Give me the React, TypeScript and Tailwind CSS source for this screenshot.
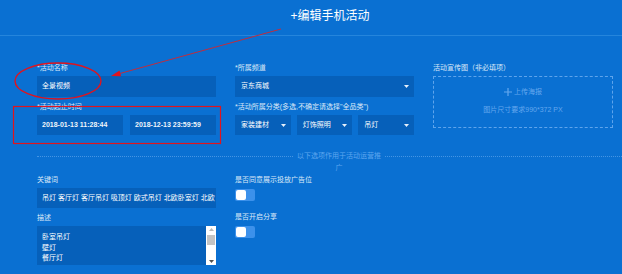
import React from "react";

const font = "font-['Liberation_Sans','Noto_Sans_CJK_SC',sans-serif]";

function Label({ children }: { children: React.ReactNode }) {
  return <div className="h-[10px] text-[7px] leading-[10px] text-[#dce9f8] whitespace-nowrap">{children}</div>;
}

function Caret() {
  return (
    <svg width="5" height="3" viewBox="0 0 5 3" className="shrink-0">
      <path d="M0 0h5L2.5 3z" fill="#e6f0fb" />
    </svg>
  );
}

function Select({ value, className = "" }: { value: string; className?: string }) {
  return (
    <div className={`flex items-center justify-between bg-[#0660ba] pl-[6px] pr-[5px] text-[7px] text-white ${className}`}>
      <span>{value}</span>
      <Caret />
    </div>
  );
}

function Toggle() {
  return (
    <div className="flex h-[12px] w-[20px] items-center rounded-[2px] bg-[#3c91eb] px-[1px]">
      <div className="h-[10px] w-[10px] rounded-[2px] bg-white" />
    </div>
  );
}

function AnnotationLayer() {
  return (
    <svg className="pointer-events-none absolute inset-0" width="622" height="274" viewBox="0 0 622 274">
      <ellipse cx="58" cy="81" rx="43" ry="18" fill="none" stroke="#e0141e" strokeWidth="1.4" />
      <rect x="13.5" y="106.5" width="207" height="37" fill="none" stroke="#e0141e" strokeWidth="1.2" />
      <line x1="281" y1="29" x2="118" y2="74" stroke="#d4262e" strokeWidth="0.9" />
      <path d="M111 76l8.5-5.5 1.6 5.8z" fill="#e0141e" />
    </svg>
  );
}

export default function App() {
  return (
    <div className={`relative h-[274px] w-[622px] overflow-hidden bg-[#0a70d2] ${font}`}>
      <header className="flex h-[36px] items-center justify-center border-b border-[#2585dc] pb-[4px] pl-[38px]">
        <h1 className="text-[12px] leading-[16px] text-white">+编辑手机活动</h1>
      </header>

      <div className="pl-[37px] pt-[27px]">
        <div className="grid grid-cols-[179px_179px_180px] gap-x-[19px]">
          <div className="flex flex-col">
            <Label>*活动名称</Label>
            <div className="mt-[3px] flex h-[21px] items-center bg-[#0660ba] px-[5px] text-[7px] text-white">全景视频</div>
            <div className="mt-[5px]">
              <Label>*活动起止时间</Label>
            </div>
            <div className="mt-[3px] grid grid-cols-2 gap-x-[7px]">
              <div className="flex h-[20px] items-center bg-[#0660ba] px-[5px] text-[7px] font-bold text-[#eef4fb]">2018-01-13 11:28:44</div>
              <div className="flex h-[20px] items-center bg-[#0660ba] px-[5px] text-[7px] font-bold text-[#eef4fb]">2018-12-13 23:59:59</div>
            </div>
          </div>

          <div className="flex flex-col">
            <Label>*所属频道</Label>
            <Select value="京东商城" className="mt-[3px] h-[21px]" />
            <div className="mt-[5px]">
              <Label>*活动所属分类(多选,不确定请选择"全品类")</Label>
            </div>
            <div className="mt-[3px] grid grid-cols-3 gap-x-[6px]">
              <Select value="家装建材" className="h-[20px]" />
              <Select value="灯饰照明" className="h-[20px]" />
              <Select value="吊灯" className="h-[20px]" />
            </div>
          </div>

          <div className="flex flex-col">
            <Label>活动宣传图（非必填项）</Label>
            <div className="mt-[3px] flex h-[52px] flex-col items-center border border-dashed border-[#5ea4ec] pt-[9px] text-[7px] text-[#64a7ee]">
              <div className="flex items-center gap-[2px] leading-[12px]">
                <svg width="8" height="8" viewBox="0 0 8 8">
                  <path d="M4 0v8M0 4h8" stroke="#64a7ee" strokeWidth="1.2" />
                </svg>
                <span>上传海报</span>
              </div>
              <div className="mt-[7px] leading-[10px]">图片尺寸要求990*372 PX</div>
            </div>
          </div>
        </div>

        <div className="mt-[15px] flex items-start">
          <div className="mt-[6px] w-[256px] border-t border-dotted border-[#4595e4]" />
          <div className="mx-[3px] w-[86px] text-center text-[7px] leading-[12px] text-[#5ea6ef]">以下选项作用于活动运营推广</div>
          <div className="mt-[6px] flex-1 border-t border-dotted border-[#4595e4]" />
        </div>

        <div className="mt-[1px] grid grid-cols-[179px_179px] gap-x-[19px]">
          <div className="flex flex-col">
            <Label>关键词</Label>
            <div className="mt-[3px] flex h-[20px] items-center overflow-hidden whitespace-nowrap bg-[#0660ba] pl-[5px] text-[7px] text-white">
              吊灯 客厅灯 客厅吊灯 吸顶灯 欧式吊灯 北欧卧室灯 北欧
            </div>
            <div className="mt-[5px]">
              <Label>描述</Label>
            </div>
            <div className="mt-[3px] flex h-[39px] bg-[#0660ba]">
              <div className="flex-1 px-[5px] pt-[6px] text-[7px] leading-[10.5px] text-white">
                <div>卧室吊灯</div>
                <div>壁灯</div>
                <div>餐厅灯</div>
              </div>
              <div className="flex w-[10px] flex-col items-center bg-white py-[2px]">
                <svg width="5" height="3" viewBox="0 0 5 3">
                  <path d="M0 3h5L2.5 0z" fill="#b8b8b8" />
                </svg>
                <div className="mt-[4px] h-[10px] w-[8px] bg-[#c4c4c4]" />
                <div className="flex-1" />
                <svg width="5" height="3" viewBox="0 0 5 3">
                  <path d="M0 0h5L2.5 3z" fill="#505050" />
                </svg>
              </div>
            </div>
          </div>

          <div className="flex flex-col">
            <Label>是否同意展示投放广告位</Label>
            <div className="mt-[4px]">
              <Toggle />
            </div>
            <div className="mt-[11px]">
              <Label>是否开启分享</Label>
            </div>
            <div className="mt-[4px]">
              <Toggle />
            </div>
          </div>
        </div>
      </div>

      <AnnotationLayer />
    </div>
  );
}
